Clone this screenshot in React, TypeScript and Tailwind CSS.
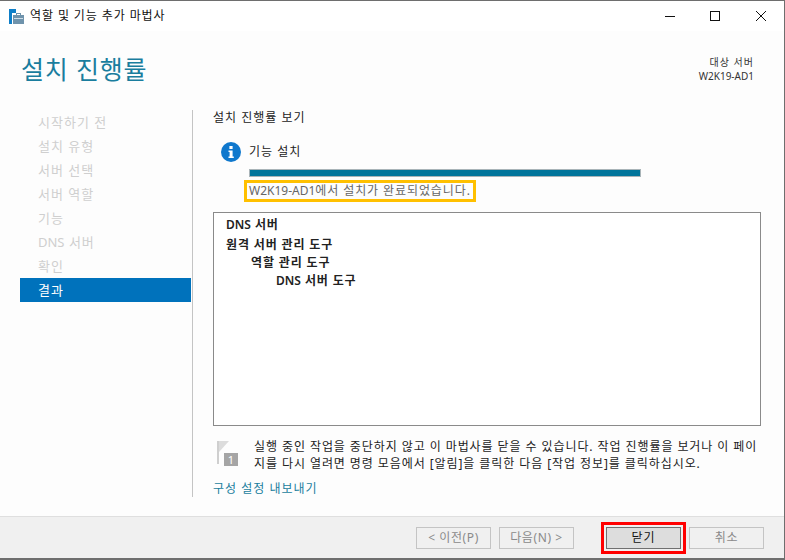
import React from "react";

const FONT = "font-['Noto_Sans','Noto_Sans_CJK_KR',sans-serif]";

const steps = ["시작하기 전", "설치 유형", "서버 선택", "서버 역할", "기능"];

function WizardIcon() {
  return (
    <svg width="15" height="15" viewBox="0 0 15 15" className="shrink-0">
      <rect x="0" y="0" width="7" height="4" fill="#0f7fc8" />
      <rect x="0" y="4" width="3" height="11" fill="#0f7fc8" />
      <rect x="4" y="6" width="11" height="9" fill="#6f93ac" />
      <rect x="7.5" y="4.5" width="4" height="2" fill="none" stroke="#6f93ac" />
      <rect x="5" y="9" width="9" height="1" fill="#cfdde7" />
    </svg>
  );
}

function Btn({ label, active }: { label: string; active?: boolean }) {
  return (
    <div
      className={
        active
          ? "w-[75px] h-[22px] flex items-center justify-center bg-[#dddddd] border border-[#707070] text-[12px] tracking-[1px] text-[#111]"
          : "w-[75px] h-[22px] flex items-center justify-center border border-[#c4c4c4] text-[12px] tracking-[0.6px] text-[#8a8a8a]"
      }
    >
      {label}
    </div>
  );
}

function Step({ children }: { children: React.ReactNode }) {
  return <div className="h-[24px] pl-[18px] pt-[2px] flex items-center text-[13px] tracking-[1px] text-[#cfcfcf]">{children}</div>;
}

export default function App() {
  return (
    <div className={`${FONT} relative w-[785px] h-[560px] flex flex-col overflow-hidden bg-white border-t border-b-2 border-r border-[#6e6e6e] text-[12px] text-[#222]`}>
      {/* sliver of the window behind */}
      <div className="absolute -top-[1px] left-[28px] w-[99px] h-[1px] bg-[#6b3f24]" />

      {/* title bar */}
      <div className="h-[30px] shrink-0 bg-white flex items-center pl-[9px]">
        <WizardIcon />
        <span className="ml-[6px] text-[12px] text-[#111] tracking-[0.9px]">역할 및 기능 추가 마법사</span>
        <div className="ml-auto flex items-center pr-[18px]">
          <svg width="10" height="10" viewBox="0 0 10 10"><path d="M0 5.5H10" stroke="#111" /></svg>
          <svg width="10" height="10" viewBox="0 0 10 10" className="ml-[35px]"><rect x="0.5" y="0.5" width="9" height="9" fill="none" stroke="#111" /></svg>
          <svg width="10" height="10" viewBox="0 0 10 10" className="ml-[36px]"><path d="M0 0L10 10M10 0L0 10" stroke="#111" /></svg>
        </div>
      </div>

      <div className="flex-1 flex flex-col bg-[#fdfdfd] min-h-0">
        {/* header */}
        <div className="h-[79px] shrink-0 flex justify-between pl-[21px] pr-[30px]">
          <div className="pt-[18px] text-[25px] leading-[40px] tracking-[0.8px] text-[#1a7d9e]">설치 진행률</div>
          <div className="pt-[24px] text-right text-[10px] leading-[14px] text-[#333]">
            <div className="tracking-[1px]">대상 서버</div>
            <div>W2K19-AD1</div>
          </div>
        </div>

        {/* body */}
        <div className="flex-1 flex min-h-0 pl-[20px]">
          <div className="w-[171px] shrink-0">
            {steps.map((s) => (
              <Step key={s}>{s}</Step>
            ))}
            <Step><span className="tracking-normal">DNS</span>&nbsp;서버</Step>
            <Step>확인</Step>
            <div className="h-[24px] pl-[18px] pt-[2px] flex items-center text-[13px] tracking-[1px] bg-[#0072bc] text-white">결과</div>
          </div>
          <div className="w-[1px] h-[387px] ml-[1px] shrink-0 bg-[#c4c4c4]" />

          <div className="flex-1 pl-[20px] pr-[24px] flex flex-col">
            <div className="h-[16px] leading-[16px] text-[12px] tracking-[1px]">설치 진행률 보기</div>
            <div className="mt-[16px] pl-[8px] flex items-center gap-[8px] h-[20px]">
              <svg width="20" height="20" viewBox="0 0 20 20">
                <circle cx="10" cy="10" r="10" fill="#0f78cd" />
                <rect x="8.4" y="4" width="3.2" height="3" fill="#fff" />
                <path d="M7.5 8.5H11.6V14.5H12.8V16H7.5V14.5H8.6V10H7.5Z" fill="#fff" />
              </svg>
              <span className="text-[12px] tracking-[1px]">기능 설치</span>
            </div>
            <div className="mt-[7px] ml-[36px] w-[392px] h-[8px] bg-[#00759b] border border-[#a9b4b8]" />
            <div className="mt-[3px] ml-[31px] self-start h-[22px] flex items-center px-[2px] border-[3px] border-[#ffc000] text-[12px] tracking-[0.9px] text-[#666] whitespace-nowrap">
              <span className="tracking-normal">W2K19-AD1</span>에서 설치가 완료되었습니다.
            </div>

            <div className="mt-[10px] w-[548px] h-[214px] shrink-0 border border-[#8a8a8a] bg-white pt-[3px] pl-[12px] text-[12px] font-semibold leading-[18px] tracking-[0.85px] text-[#222]">
              <div className="h-[20px]"><span className="tracking-normal">DNS</span> 서버</div>
              <div>원격 서버 관리 도구</div>
              <div className="pl-[25px]">역할 관리 도구</div>
              <div className="pl-[50px]"><span className="tracking-normal">DNS</span> 서버 도구</div>
            </div>

            <div className="mt-[12px] flex pl-[3px]">
              <svg width="24" height="26" viewBox="0 0 24 26" className="shrink-0 mt-[2px]">
                <path d="M1 1H3V24H1Z" fill="#cfcfcf" />
                <path d="M3 1H13L3 12Z" fill="#dcdcdc" />
                <rect x="8" y="13" width="14" height="13" fill="#a5a5a5" />
                <text x="15" y="24" fontSize="11" fill="#fff" textAnchor="middle">1</text>
              </svg>
              <div className="ml-[14px] w-[512px] whitespace-nowrap text-[12px] leading-[17px] tracking-[0.92px] text-[#222]">
                실행 중인 작업을 중단하지 않고 이 마법사를 닫을 수 있습니다. 작업 진행률을 보거나 이 페이
                <br />
                지를 다시 열려면 명령 모음에서 [알림]을 클릭한 다음 [작업 정보]를 클릭하십시오.
              </div>
            </div>
            <div className="mt-[9px] text-[12px] leading-[16px] tracking-[1px] text-[#1a7d9e]">구성 설정 내보내기</div>
          </div>
        </div>

        {/* footer */}
        <div className="h-[42px] shrink-0 pt-[1px] bg-[#f0f0f0] border-t border-[#dfdfdf] flex items-center justify-end pr-[20px]">
          <Btn label="< 이전(P)" />
          <div className="ml-[8px]"><Btn label="다음(N) >" /></div>
          <div className="ml-[27px] mr-[3px] border-[3px] border-[#ff0000] p-[2px] flex">
            <Btn label="닫기" active />
          </div>
          <Btn label="취소" />
        </div>
      </div>
    </div>
  );
}
